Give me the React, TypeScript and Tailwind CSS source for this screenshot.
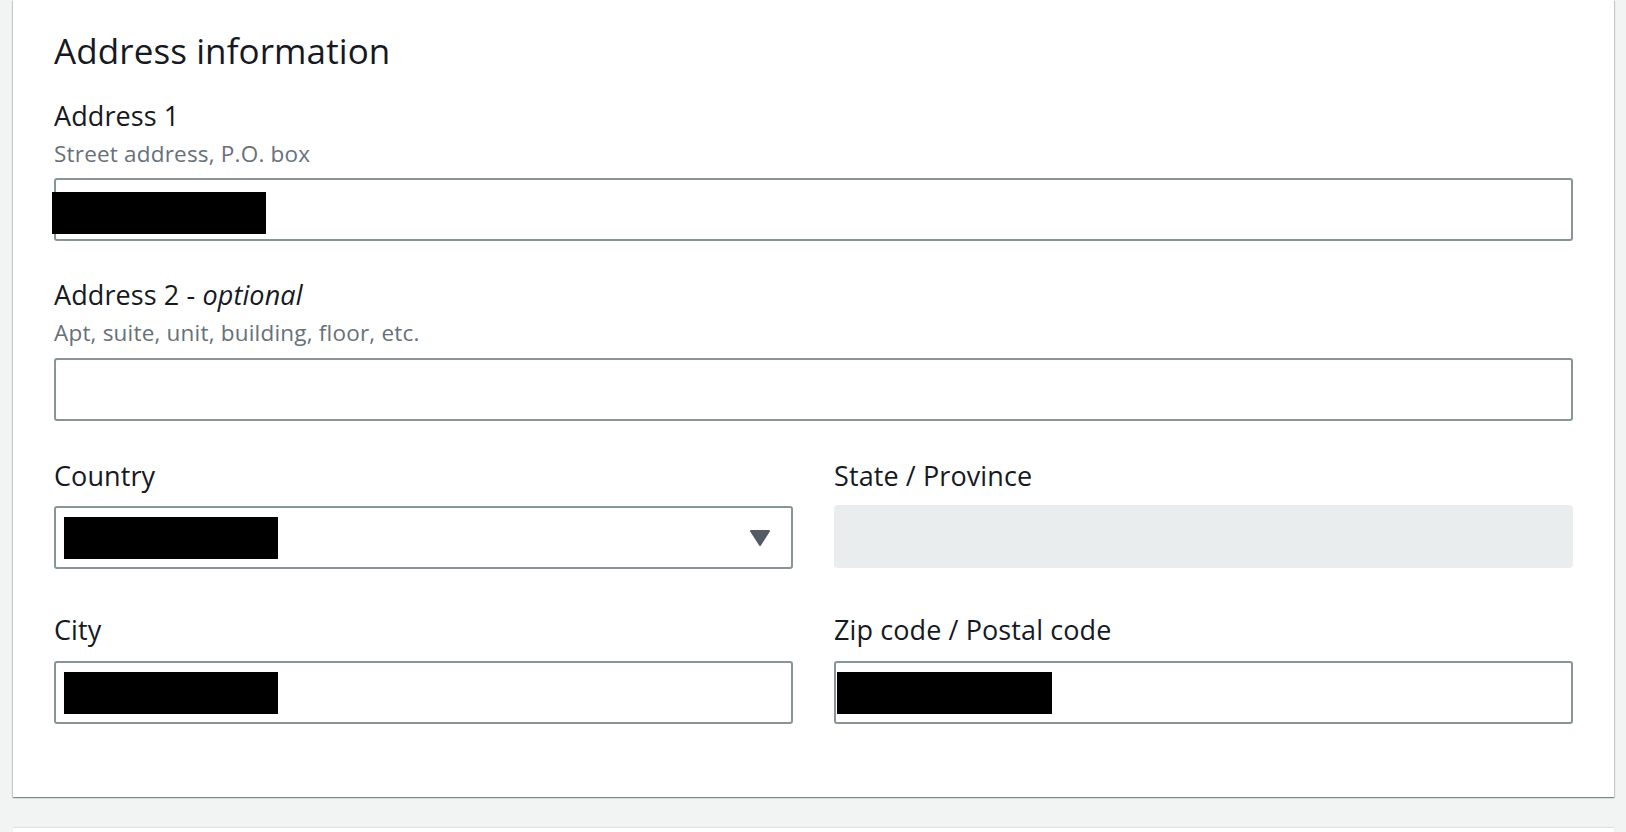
import React from 'react'

const font = { fontFamily: '"Open Sans", "Noto Sans", sans-serif' }

function Redacted({ className = '' }: { className?: string }) {
  return <div className={`h-[42px] w-[214px] bg-black ${className}`} />
}

function Label({ children }: { children: React.ReactNode }) {
  return <div className="text-[27px] leading-[36px] tracking-[0.1px] text-[#16191f]">{children}</div>
}

function Hint({ children }: { children: React.ReactNode }) {
  return <div className="mt-[5px] text-[22.5px] leading-[30px] tracking-[0.2px] text-[#687078]">{children}</div>
}

function Field({ children, className = '' }: { children?: React.ReactNode; className?: string }) {
  return (
    <div className={`h-[63px] rounded-[3px] border-2 border-[#879596] bg-white ${className}`}>
      {children}
    </div>
  )
}

export default function App() {
  return (
    <div className="min-h-[832px] w-full overflow-hidden bg-[#f2f3f3] px-[13px]" style={font}>
      <section className="w-[1601px] bg-white px-[41px] pb-[73px] pt-[29px] shadow-[0_1px_1px_0_rgba(0,28,36,0.3),1px_1px_1px_0_rgba(0,28,36,0.15),-1px_1px_1px_0_rgba(0,28,36,0.15)]">
        <h2 className="text-[35px] leading-[44px] tracking-[0.1px] text-[#16191f]">Address information</h2>

        <div className="mt-[25px]">
          <Label>Address 1</Label>
          <Hint>Street address, P.O. box</Hint>
          <Field className="mt-[9px] pt-[12px]">
            <Redacted className="-ml-[4px]" />
          </Field>
        </div>

        <div className="mt-[36px]">
          <Label>
            Address 2 - <span className="italic">optional</span>
          </Label>
          <Hint>Apt, suite, unit, building, floor, etc.</Hint>
          <Field className="mt-[10px]" />
        </div>

        <div className="mt-[37px] grid grid-cols-2 gap-x-[41px]">
          <div>
            <Label>Country</Label>
            <Field className="mt-[12px] flex items-center justify-between pl-[8px] pr-[20px]">
              <Redacted />
              <svg width="22" height="18" viewBox="0 0 22 18">
                <path d="M2 2 H20 L11 16 Z" fill="#545b64" stroke="#545b64" strokeWidth="2" strokeLinejoin="round" />
              </svg>
            </Field>
          </div>
          <div>
            <Label>State / Province</Label>
            <div className="mt-[11px] h-[63px] rounded-[4px] bg-[#eaeded]" />
          </div>
        </div>

        <div className="mt-[43px] grid grid-cols-2 gap-x-[41px]">
          <div>
            <Label>City</Label>
            <Field className="mt-[13px] flex items-center pl-[8px]">
              <Redacted />
            </Field>
          </div>
          <div>
            <Label>Zip code / Postal code</Label>
            <Field className="mt-[13px] flex items-center pl-[1px]">
              <Redacted className="w-[215px]" />
            </Field>
          </div>
        </div>
      </section>
      <div className="mt-[31px] h-[40px] w-[1601px] bg-white shadow-[0_-1px_1px_0_rgba(0,28,36,0.08)]" />
    </div>
  )
}
